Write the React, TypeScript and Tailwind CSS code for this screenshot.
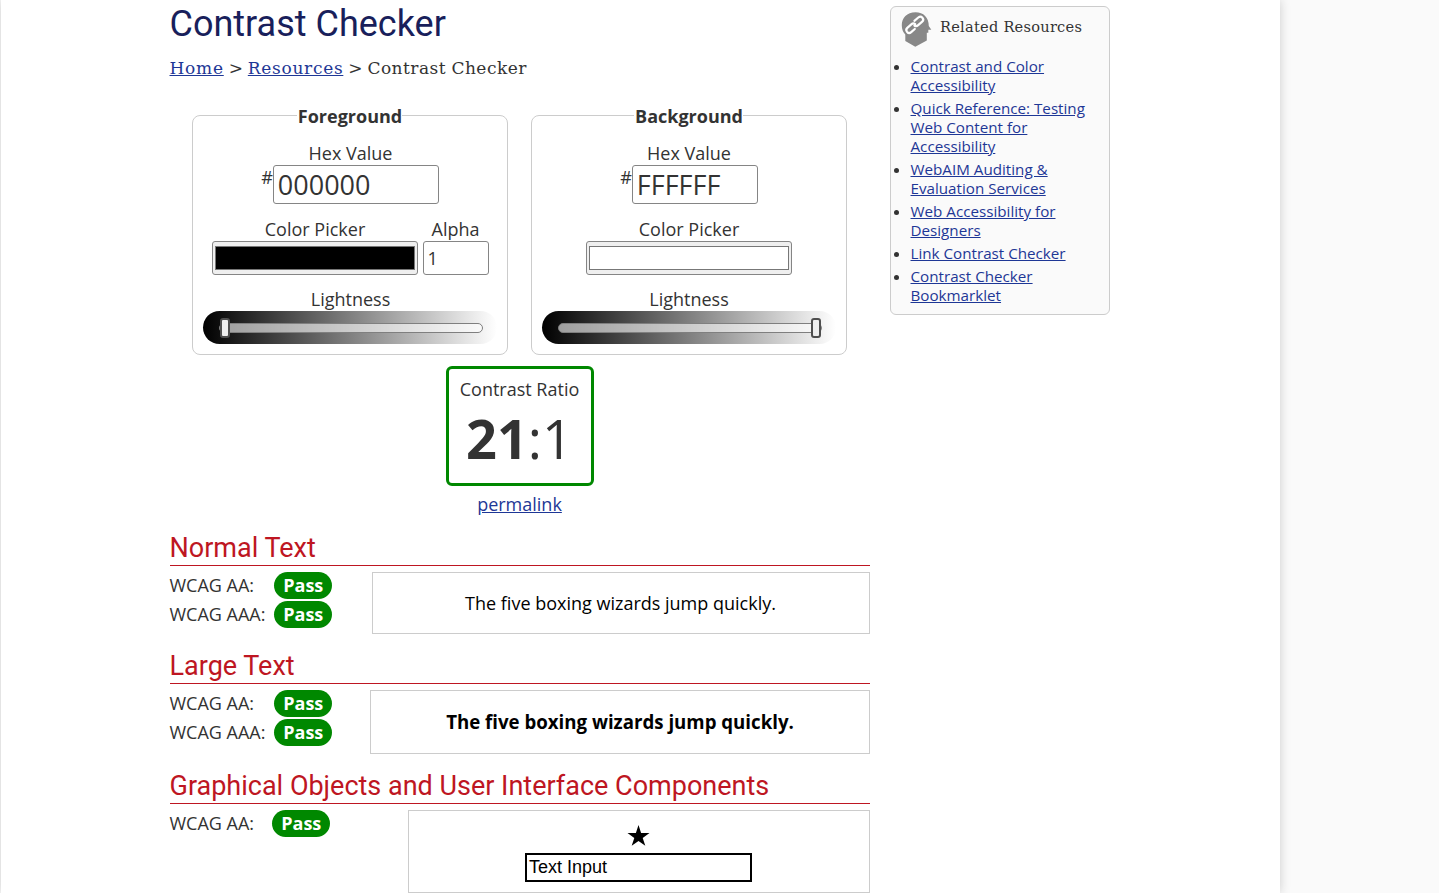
import React from "react";

const link = "text-[#1e3796] underline";
const label = "h-[24px] leading-[24px] whitespace-nowrap";

function Slider({ atEnd }: { atEnd?: boolean }) {
  return (
    <div className="mr-[10px] ml-[9.5px] flex h-[33px] items-center rounded-[16.5px] bg-linear-to-r/srgb from-black to-white pr-[13.5px] pl-[16px]">
      <div className="relative h-[10px] w-full rounded-full border border-[#7f7f7f] bg-white/60">
        <div
          className={
            "absolute top-[-6px] h-[20px] w-[10px] rounded-[3px] border-2 border-[#4f4f4f] bg-[#efefef] " +
            (atEnd ? "right-[0px]" : "left-[0px]")
          }
        />
      </div>
    </div>
  );
}

function Panel({ title, children }: { title: string; children: React.ReactNode }) {
  return (
    <fieldset className="h-[252px] w-[316px] rounded-[8px] border border-[#cccccc] text-center">
      <legend className="mx-auto h-[24px] pl-px leading-[26px] font-bold">{title}</legend>
      <div className="pt-[14px] pl-px">{children}</div>
    </fieldset>
  );
}

function Swatch({ color }: { color: string }) {
  return (
    <div className="h-[34px] w-[206px] rounded-[3px] border border-[#858585] bg-[#efefef] px-[2px] py-[4px]">
      <div className={"h-full w-full border border-[#777777] " + color} />
    </div>
  );
}

function Pass() {
  return <b className="h-[27px] w-[58px] rounded-full bg-[#008800] pl-[1.5px] text-center leading-[27px] text-white">Pass</b>;
}

function Row({ name, width }: { name: string; width: string }) {
  return (
    <div className="flex h-[29px]">
      <span className={"leading-[27px] whitespace-nowrap " + width}>{name}</span>
      <Pass />
    </div>
  );
}

function Heading({ children }: { children: React.ReactNode }) {
  return (
    <h2 className="h-[34px] border-b border-[#be1622] font-['Roboto',sans-serif] text-[27px] leading-[33px] whitespace-nowrap text-[#be1622]">
      {children}
    </h2>
  );
}

const resources = [
  ["Contrast and Color", "Accessibility"],
  ["Quick Reference: Testing", "Web Content for", "Accessibility"],
  ["WebAIM Auditing &", "Evaluation Services"],
  ["Web Accessibility for", "Designers"],
  ["Link Contrast Checker"],
  ["Contrast Checker", "Bookmarklet"],
];

export default function App() {
  return (
    <div className="h-[893px] overflow-hidden bg-[#fafafa] pl-px font-['Open_Sans',sans-serif] text-[18px] text-[#333333]">
      <div className="flex h-full w-[1279px] gap-[20px] bg-white pl-[168.5px] shadow-[0_0_10px_#cccccc]">
        <main className="w-[700px] shrink-0">
          <h1 className="h-[48px] font-['Roboto',sans-serif] text-[36px] leading-[48px] text-[#191f5b]">Contrast Checker</h1>
          <nav className="mt-[8px] h-[24px] font-['DejaVu_Serif',serif] text-[17px] leading-[24px] [word-spacing:-0.5px] whitespace-nowrap">
            <a className={"tracking-[0.75px] " + link}>Home</a> &gt; <a className={"tracking-[0.7px] " + link}>Resources</a> &gt;{" "}
            <span className="tracking-[0.48px]">Contrast Checker</span>
          </nav>

          <div className="mt-[23px] flex gap-[23px] pl-[22px]">
            <Panel title="Foreground">
              <div className={"pl-px " + label}>Hex Value</div>
              <div className="flex justify-center">
                <span className="leading-[25px]">#</span>
                <div className="h-[39px] w-[166px] rounded-[3px] border border-[#858585] bg-white pl-[4px] text-left text-[27px] leading-[38px]">000000</div>
              </div>
              <div className="mt-[13px] flex justify-center gap-[5px]">
                <div>
                  <div className={"pl-px " + label}>Color Picker</div>
                  <Swatch color="bg-black" />
                </div>
                <div className="w-[66px]">
                  <div className={label}>Alpha</div>
                  <div className="h-[34px] rounded-[3px] border border-[#858585] bg-white pl-[4px] text-left leading-[33px]">1</div>
                </div>
              </div>
              <div className={"mt-[12px] pl-px " + label}>Lightness</div>
              <Slider />
            </Panel>
            <Panel title="Background">
              <div className={label}>Hex Value</div>
              <div className="flex justify-center">
                <span className="leading-[25px]">#</span>
                <div className="h-[39px] w-[126px] rounded-[3px] border border-[#858585] bg-white pl-[4px] text-left text-[27px] leading-[38px]">FFFFFF</div>
              </div>
              <div className={"mt-[13px] " + label}>Color Picker</div>
              <div className="flex justify-center pr-px">
                <Swatch color="bg-white" />
              </div>
              <div className={"mt-[12px] " + label}>Lightness</div>
              <Slider atEnd />
            </Panel>
          </div>

          <div className="mt-[11px] flex flex-col items-center">
            <div className="h-[120px] w-[148px] rounded-[6px] border-[3px] border-[#008800] text-center">
              <div className="mt-[8px] h-[24px] leading-[24px]">Contrast Ratio</div>
              <div className="mt-[4px] h-[66px] text-[54px] leading-[66px] whitespace-nowrap">
                <b>21</b>:1
              </div>
            </div>
            <a className={"mt-[6px] h-[24px] leading-[24px] " + link}>permalink</a>
          </div>

          <section className="mt-[16px] h-[118px]">
            <Heading>Normal Text</Heading>
            <div className="mt-[6px] flex justify-between">
              <div>
                <Row name="WCAG AA:" width="w-[104px]" />
                <Row name="WCAG AAA:" width="w-[104px]" />
              </div>
              <div className="h-[62px] w-[498px] border border-[#cccccc] text-center leading-[61px] text-black">
                The five boxing wizards jump quickly.
              </div>
            </div>
          </section>

          <section className="h-[120px]">
            <Heading>Large Text</Heading>
            <div className="mt-[6px] flex justify-between">
              <div>
                <Row name="WCAG AA:" width="w-[104px]" />
                <Row name="WCAG AAA:" width="w-[104px]" />
              </div>
              <div className="h-[64px] w-[500px] border border-[#cccccc] pl-px text-center text-[18.667px] leading-[62px] font-bold text-black">
                The five boxing wizards jump quickly.
              </div>
            </div>
          </section>

          <section>
            <Heading>Graphical Objects and User Interface Components</Heading>
            <div className="mt-[6px] flex justify-between">
              <Row name="WCAG AA:" width="w-[102px]" />
              <div className="flex h-[83px] w-[462px] flex-col items-center border border-[#cccccc] pt-[13px] text-black">
                <svg className="mb-px h-[28px] w-[24px]" viewBox="0.5 0 24 28">
                  <path d="M12 1 14.6 9H23l-6.8 5 2.6 7.8L12 17l-6.8 4.8L7.8 14 1 9h8.4z" />
                </svg>
                <div className="mr-px h-[29px] w-[227px] border-2 border-black bg-white pl-[2.5px] font-['Liberation_Sans',sans-serif] text-[18px] leading-[25px]">
                  Text Input
                </div>
              </div>
            </div>
          </section>
        </main>

        <aside className="mt-[6px] h-[309px] w-[220px] rounded-[6px] border border-[#cccccc] bg-[#fafafa]">
          <div className="flex h-[50px] pl-[10px]">
            <svg className="mt-[5px] h-[36px] w-[31px]" viewBox="0 0 31 36">
              <path
                fill="#888888"
                d="M14.5.3C6 .3.6 6 .8 13.5c0 4 1.4 6.7 3.5 9V29l10 5.7 11.5-6.3v-7.7h1.5v-3h3L27.8 14C27.8 5.5 22.5.3 14.5.3z"
              />
              <g fill="none" stroke="#ffffff" strokeWidth="2.2" strokeLinecap="round" strokeLinejoin="round">
                <path d="m13.4 8.8 3.9-3.3c1.4-1.1 2.9-1.1 4.1.2 1.2 1.4 1 2.9-.2 4l-4 3.5c-1.3 1.1-2.6 1.2-3.8.3" />
                <path d="m13.8 17-3.6 3.1c-1.4 1.2-2.9 1.1-4.1-.2-1.2-1.4-1-2.9.2-4l4-3.5c1.3-1.1 2.7-1.2 3.9-.2" />
              </g>
            </svg>
            <h2 className="ml-[8.5px] font-['DejaVu_Serif',serif] text-[14.6px] leading-[39px] tracking-[0.24px] whitespace-nowrap">Related Resources</h2>
          </div>
          <ul className="flex flex-col gap-[4px] text-[15.2px] leading-[19px]">
            {resources.map((lines) => (
              <li key={lines.join(" ")} className="flex">
                <span className="mt-[8px] mr-[12px] ml-[3px] h-[5px] w-[5px] shrink-0 rounded-full bg-[#333333]" />
                <a className={"whitespace-nowrap " + link}>
                  {lines.map((l, i) => (
                    <React.Fragment key={l}>
                      {i > 0 && <br />}
                      {l}
                    </React.Fragment>
                  ))}
                </a>
              </li>
            ))}
          </ul>
        </aside>
      </div>
    </div>
  );
}
